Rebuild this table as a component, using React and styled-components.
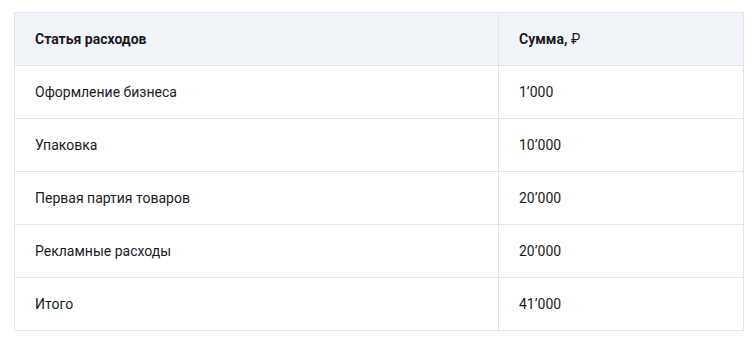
import React from 'react'
import styled, { createGlobalStyle } from 'styled-components'

const Global = createGlobalStyle`
  body {
    margin: 0;
    background: #fff;
    font-family: Roboto, "Noto Sans", sans-serif;
    color: #1b1b1f;
  }
`

const Wrap = styled.div`
  padding: 12px 11px 0 14px;
`

const Table = styled.table`
  width: 730px;
  border-collapse: collapse;
  border: 1px solid #e3e5ea;
  font-size: 14px;
`

const Row = styled.tr`
  height: 53px;
  background: ${(p) => (p.head ? '#f1f4f8' : '#fff')};
`

const Cell = styled.td`
  padding: 0 20px;
  border: 1px solid #e3e5ea;
  font-weight: ${(p) => (p.head ? 700 : 400)};
  width: ${(p) => p.w || 'auto'};
  text-align: left;
  vertical-align: middle;
`

const Currency = styled.span`
  font-weight: 400;
`

const rows = [
  ['Оформление бизнеса', '1’000'],
  ['Упаковка', '10’000'],
  ['Первая партия товаров', '20’000'],
  ['Рекламные расходы', '20’000'],
  ['Итого', '41’000'],
]

export default function App() {
  return (
    <>
      <Global />
      <Wrap>
        <Table>
          <thead>
            <Row head>
              <Cell as="th" head w="443px">Статья расходов</Cell>
              <Cell as="th" head>
                Сумма, <Currency>₽</Currency>
              </Cell>
            </Row>
          </thead>
          <tbody>
            {rows.map(([name, sum]) => (
              <Row key={name}>
                <Cell>{name}</Cell>
                <Cell>{sum}</Cell>
              </Row>
            ))}
          </tbody>
        </Table>
      </Wrap>
    </>
  )
}
